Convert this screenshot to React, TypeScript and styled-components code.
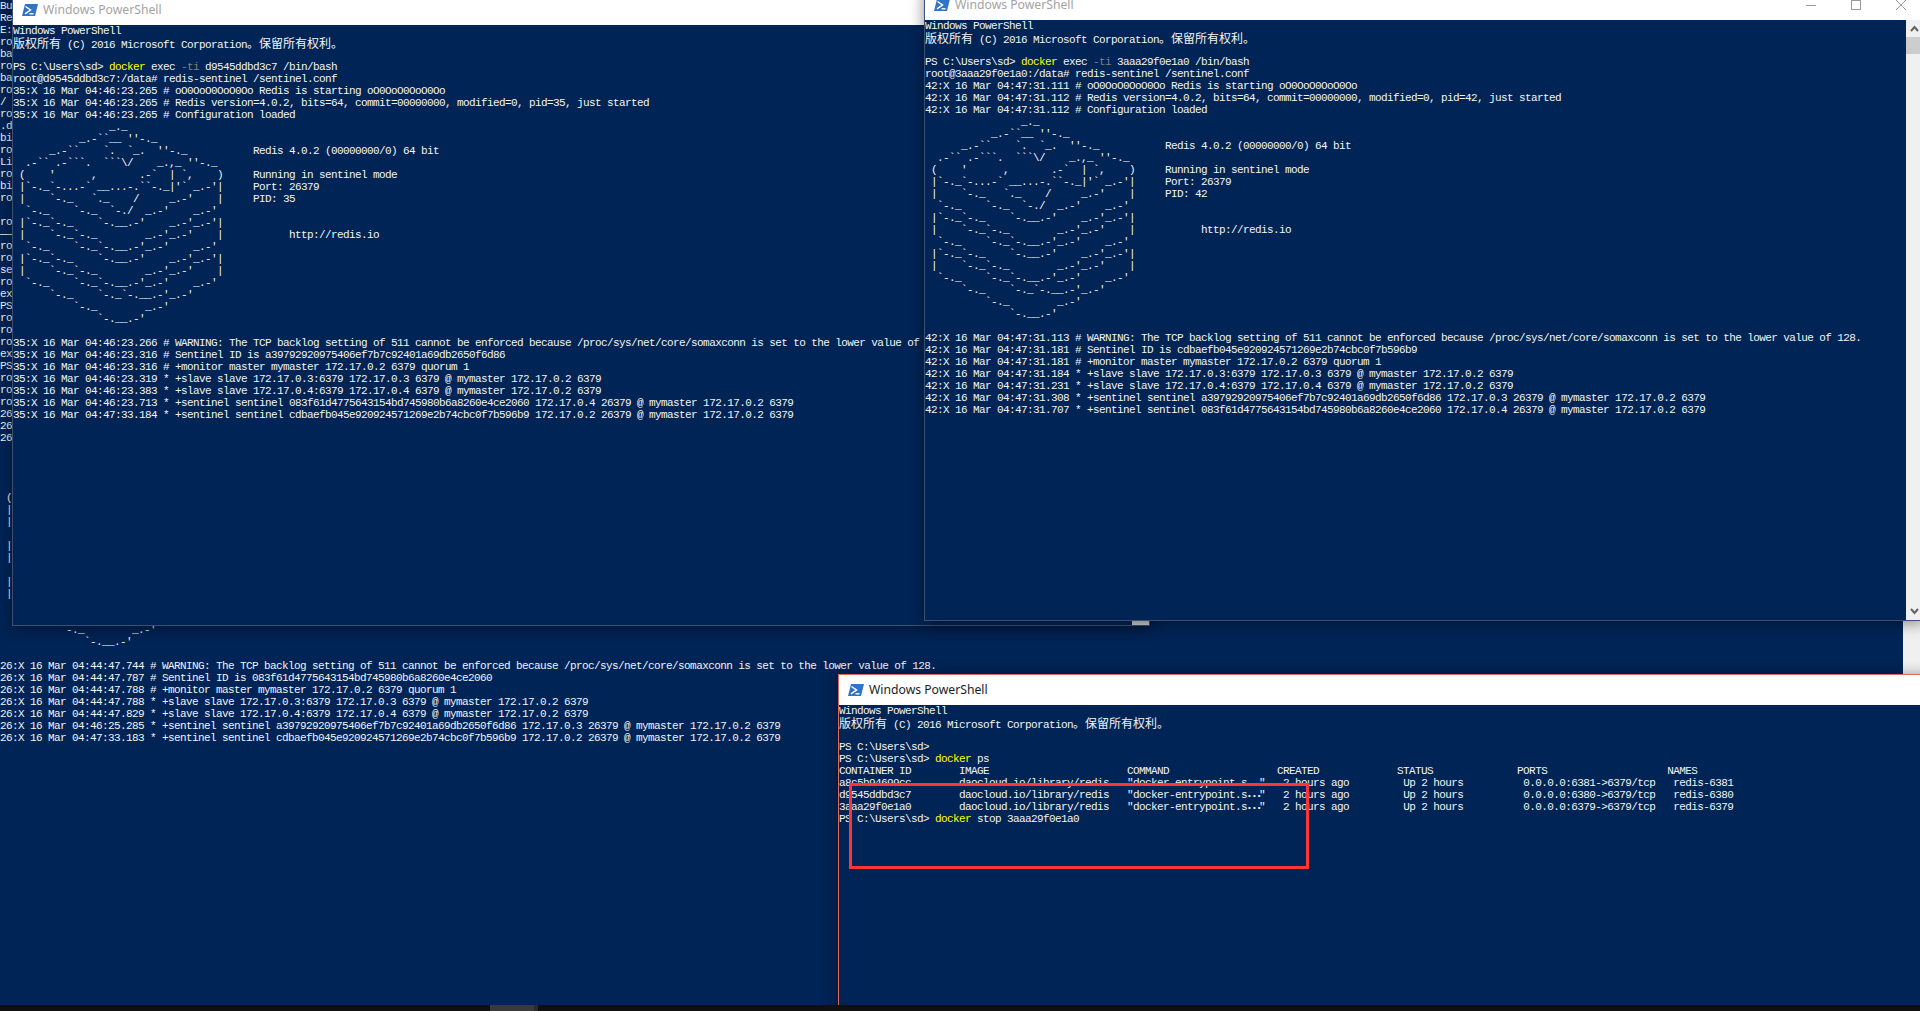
import React from 'react'
import styled, { createGlobalStyle } from 'styled-components'

const BLUE = '#012456'

const GlobalStyle = createGlobalStyle`
    html, body {
        margin: 0;
        padding: 0;
        background: ${BLUE};
        overflow: hidden;
    }
`

const Desktop = styled.div`
    position: relative;
    width: 1920px;
    height: 1011px;
    overflow: hidden;
    display: flex;
    flex-direction: column;
`

const BackTerminal = styled.div`
    flex: 1;
    min-height: 0;
    display: flex;
    background: ${BLUE};
`

const Taskbar = styled.div`
    position: relative;
    z-index: 5;
    height: 6px;
    padding-left: 490px;
    display: flex;
    background: #101010;
`

const TaskbarItem = styled.div`
    width: 44px;
    background: #3a3a3a;
    border-right: 4px solid #2b2b2b;
`

const Window = styled.div<{ $left: number; $top: number; $width: number; $height: number; $layer: number; $active?: boolean }>`
    position: absolute;
    left: ${(p) => p.$left}px;
    top: ${(p) => p.$top}px;
    width: ${(p) => p.$width}px;
    height: ${(p) => p.$height}px;
    z-index: ${(p) => p.$layer};
    box-sizing: border-box;
    display: flex;
    flex-direction: column;
    border: 1px solid ${(p) => (p.$active ? '#de6a5e' : '#3c5073')};
    box-shadow: 0 2px 14px rgba(0, 0, 0, 0.45);
`

const TitleBar = styled.div`
    flex: none;
    height: 30px;
    padding-left: 9px;
    display: flex;
    align-items: center;
    background: #fff;
`

const TitleIcon = styled.svg`
    flex: none;
    width: 16px;
    height: 12px;
    margin-right: 5px;
`

const TitleText = styled.span<{ $active?: boolean }>`
    font-family: 'Noto Sans', sans-serif;
    font-size: 12.2px;
    line-height: 30px;
    color: ${(p) => (p.$active ? '#1c1c1c' : '#a3a3a3')};
`

const Controls = styled.div`
    margin-left: auto;
    display: flex;
`

const ControlButton = styled.div`
    width: 45px;
    height: 30px;
    display: flex;
    align-items: center;
    justify-content: center;

    svg {
        width: 10px;
        height: 10px;
    }
`

const WindowBody = styled.div`
    flex: 1;
    min-height: 0;
    display: flex;
    background: ${BLUE};
`

const Console = styled.div`
    flex: 1;
    min-width: 0;
    overflow: hidden;
    background: ${BLUE};
`

const Line = styled.div`
    height: 12px;
    line-height: 12px;
    white-space: pre;
    color: #f4f4f4;
    font-family: 'Liberation Mono', monospace;
    font-size: 11px;
    letter-spacing: -0.6px;
`

const Command = styled.span`
    color: #ffff00;
`

const Flag = styled.span`
    color: #808080;
`

const Cjk = styled.span`
    font-family: 'Noto Sans CJK SC', sans-serif;
    font-size: 12px;
    letter-spacing: 0;
`

const WideDots = styled.span`
    display: inline-block;
    width: 12px;
    font-size: 8px;
    letter-spacing: 0;
    text-align: center;
`

const ScrollTrack = styled.div<{ $plain?: boolean }>`
    flex: none;
    width: 17px;
    display: flex;
    flex-direction: column;
    align-items: center;
    background: ${(p) => (p.$plain ? '#cdcdcd' : '#f0f0f0')};
`

const ScrollArrow = styled.svg`
    flex: none;
    width: 9px;
    height: 17px;
`

const ScrollThumb = styled.div`
    flex: none;
    width: 17px;
    height: 17px;
    background: #cdcdcd;
`

const ScrollSpacer = styled.div`
    flex: 1;
`

const Annotation = styled.div`
    position: absolute;
    z-index: 4;
    left: 849px;
    top: 783px;
    width: 460px;
    height: 86px;
    box-sizing: border-box;
    border: 3px solid #ff3535;
`

const redisArt = (pid: number) => [
    '                _._',
    "           _.-``__ ''-._",
    "      _.-``    `.  `_.  ''-._           Redis 4.0.2 (00000000/0) 64 bit",
    "  .-`` .-```.  ```\\/    _.,_ ''-._",
    " (    '      ,       .-`  | `,    )     Running in sentinel mode",
    " |`-._`-...-` __...-.``-._|'` _.-'|     Port: 26379",
    ` |    \`-._   \`._    /     _.-'    |     PID: ${pid}`,
    "  `-._    `-._  `-./  _.-'    _.-'",
    " |`-._`-._    `-.__.-'    _.-'_.-'|",
    " |    `-._`-._        _.-'_.-'    |           http://redis.io",
    "  `-._    `-._`-.__.-'_.-'    _.-'",
    " |`-._`-._    `-.__.-'    _.-'_.-'|",
    " |    `-._`-._        _.-'_.-'    |",
    "  `-._    `-._`-.__.-'_.-'    _.-'",
    "      `-._    `-._`-.__.-'_.-'",
    "          `-._        _.-'",
    "              `-.__.-'",
    ' ',
]

const TCP_WARNING =
    'WARNING: The TCP backlog setting of 511 cannot be enforced because /proc/sys/net/core/somaxconn is set to the lower value of 128.'
const ID_A = 'a39792920975406ef7b7c92401a69db2650f6d86'
const ID_B = '083f61d4775643154bd745980b6a8260e4ce2060'
const ID_C = 'cdbaefb045e920924571269e2b74cbc0f7b596b9'
const MASTER = '@ mymaster 172.17.0.2 6379'
const MONITOR = '+monitor master mymaster 172.17.0.2 6379 quorum 1'
const SLAVE_3 = `+slave slave 172.17.0.3:6379 172.17.0.3 6379 ${MASTER}`
const SLAVE_4 = `+slave slave 172.17.0.4:6379 172.17.0.4 6379 ${MASTER}`

// left edge of the terminal behind the two upper windows
const backStrip = [
    'Bu', 'Re', 'E:', 'ro', 'ba', 'ro', 'ba', 'ro', '/', 'ro', '.d', 'bi', 'ro', 'Li', 'ro', 'bi', 'ro', ' ',
    'ro', '——]', 'ro', 'ro', 'se', 'ro', 'ex', 'PS', 'ro', 'ro', 'ro', 'ex', 'PS', 'ro', 'ro', 'ro', '26', '26', '26',
]

const backLog = [
    `26:X 16 Mar 04:44:47.744 # ${TCP_WARNING}`,
    `26:X 16 Mar 04:44:47.787 # Sentinel ID is ${ID_B}`,
    `26:X 16 Mar 04:44:47.788 # ${MONITOR}`,
    `26:X 16 Mar 04:44:47.788 * ${SLAVE_3}`,
    `26:X 16 Mar 04:44:47.829 * ${SLAVE_4}`,
    `26:X 16 Mar 04:46:25.285 * +sentinel sentinel ${ID_A} 172.17.0.3 26379 ${MASTER}`,
    `26:X 16 Mar 04:47:33.183 * +sentinel sentinel ${ID_C} 172.17.0.2 26379 ${MASTER}`,
]

const leftLog = [
    `35:X 16 Mar 04:46:23.266 # ${TCP_WARNING}`,
    `35:X 16 Mar 04:46:23.316 # Sentinel ID is ${ID_A}`,
    `35:X 16 Mar 04:46:23.316 # ${MONITOR}`,
    `35:X 16 Mar 04:46:23.319 * ${SLAVE_3}`,
    `35:X 16 Mar 04:46:23.383 * ${SLAVE_4}`,
    `35:X 16 Mar 04:46:23.713 * +sentinel sentinel ${ID_B} 172.17.0.4 26379 ${MASTER}`,
    `35:X 16 Mar 04:47:33.184 * +sentinel sentinel ${ID_C} 172.17.0.2 26379 ${MASTER}`,
]

const rightLog = [
    `42:X 16 Mar 04:47:31.113 # ${TCP_WARNING}`,
    `42:X 16 Mar 04:47:31.181 # Sentinel ID is ${ID_C}`,
    `42:X 16 Mar 04:47:31.181 # ${MONITOR}`,
    `42:X 16 Mar 04:47:31.184 * ${SLAVE_3}`,
    `42:X 16 Mar 04:47:31.231 * ${SLAVE_4}`,
    `42:X 16 Mar 04:47:31.308 * +sentinel sentinel ${ID_A} 172.17.0.3 26379 ${MASTER}`,
    `42:X 16 Mar 04:47:31.707 * +sentinel sentinel ${ID_B} 172.17.0.4 26379 ${MASTER}`,
]

const containers = [
    ['a8c5b94699cc', '6381'],
    ['d9545ddbd3c7', '6380'],
    ['3aaa29f0e1a0', '6379'],
]

const Lines = ({ items }: { items: string[] }) => (
    <>
        {items.map((text, i) => (
            <Line key={i}>{text}</Line>
        ))}
    </>
)

const Banner = () => (
    <>
        <Line>Windows PowerShell</Line>
        <Line>
            <Cjk>版权所有</Cjk> (C) 2016 Microsoft Corporation<Cjk>。保留所有权利。</Cjk>
        </Line>
        <Line> </Line>
    </>
)

const PowerShellIcon = () => (
    <TitleIcon viewBox="0 0 16 12">
        <polygon points="3,0 16,0 13,12 0,12" fill="#2f74c6" />
        <path d="M3.5 2.5 L8.5 6 L3 9.8" fill="none" stroke="#fff" strokeWidth="1.5" />
        <path d="M7.5 9.8 H11.5" fill="none" stroke="#fff" strokeWidth="1.4" />
    </TitleIcon>
)

const Title = ({ active, children }: { active?: boolean; children?: React.ReactNode }) => (
    <TitleBar>
        <PowerShellIcon />
        <TitleText $active={active}>Windows PowerShell</TitleText>
        {children}
    </TitleBar>
)

const WindowControls = () => (
    <Controls>
        <ControlButton>
            <svg viewBox="0 0 10 10">
                <path d="M0 5.5 H10" stroke="#999" fill="none" />
            </svg>
        </ControlButton>
        <ControlButton>
            <svg viewBox="0 0 10 10">
                <rect x="0.5" y="0.5" width="9" height="9" stroke="#999" fill="none" />
            </svg>
        </ControlButton>
        <ControlButton>
            <svg viewBox="0 0 10 10">
                <path d="M0 0 L10 10 M10 0 L0 10" stroke="#999" fill="none" />
            </svg>
        </ControlButton>
    </Controls>
)

const Scrollbar = () => (
    <ScrollTrack>
        <ScrollArrow viewBox="0 0 9 17">
            <path d="M1 11 L4.5 7 L8 11" fill="none" stroke="#606060" strokeWidth="2" />
        </ScrollArrow>
        <ScrollThumb />
        <ScrollSpacer />
        <ScrollArrow viewBox="0 0 9 17">
            <path d="M1 6 L4.5 10 L8 6" fill="none" stroke="#606060" strokeWidth="2" />
        </ScrollArrow>
    </ScrollTrack>
)

const ContainerRow = ({ id, port }: { id: string; port: string }) => (
    <Line>
        {id.padEnd(20)}
        {'daocloud.io/library/redis'.padEnd(28)}
        {'"docker-entrypoint.s'}
        <WideDots>•••</WideDots>
        {'"   '}
        {'2 hours ago'.padEnd(20)}
        {'Up 2 hours'.padEnd(20)}
        {`0.0.0.0:${port}->6379/tcp`.padEnd(25)}
        {`redis-${port}`}
    </Line>
)

export default function App() {
    return (
        <Desktop>
            <GlobalStyle />
            <BackTerminal>
                <Console>
                    <Lines items={backStrip} />
                    <Lines items={redisArt(26)} />
                    <Lines items={backLog} />
                </Console>
                <ScrollTrack />
            </BackTerminal>
            <Taskbar>
                <TaskbarItem />
            </Taskbar>

            <Window $left={12} $top={-6} $width={1138} $height={632} $layer={1}>
                <Title />
                <WindowBody>
                    <Console>
                        <Banner />
                        <Line>
                            PS C:\Users\sd&gt; <Command>docker</Command> exec <Flag>-ti</Flag> d9545ddbd3c7 /bin/bash
                        </Line>
                        <Line>root@d9545ddbd3c7:/data# redis-sentinel /sentinel.conf</Line>
                        <Line>35:X 16 Mar 04:46:23.265 # oO0OoO0OoO0Oo Redis is starting oO0OoO0OoO0Oo</Line>
                        <Line>
                            35:X 16 Mar 04:46:23.265 # Redis version=4.0.2, bits=64, commit=00000000, modified=0, pid=35, just started
                        </Line>
                        <Line>35:X 16 Mar 04:46:23.265 # Configuration loaded</Line>
                        <Lines items={redisArt(35)} />
                        <Lines items={leftLog} />
                    </Console>
                    <ScrollTrack $plain />
                </WindowBody>
            </Window>

            <Window $left={924} $top={-11} $width={1000} $height={632} $layer={2}>
                <Title>
                    <WindowControls />
                </Title>
                <WindowBody>
                    <Console>
                        <Banner />
                        <Line>
                            PS C:\Users\sd&gt; <Command>docker</Command> exec <Flag>-ti</Flag> 3aaa29f0e1a0 /bin/bash
                        </Line>
                        <Line>root@3aaa29f0e1a0:/data# redis-sentinel /sentinel.conf</Line>
                        <Line>42:X 16 Mar 04:47:31.111 # oO0OoO0OoO0Oo Redis is starting oO0OoO0OoO0Oo</Line>
                        <Line>
                            42:X 16 Mar 04:47:31.112 # Redis version=4.0.2, bits=64, commit=00000000, modified=0, pid=42, just started
                        </Line>
                        <Line>42:X 16 Mar 04:47:31.112 # Configuration loaded</Line>
                        <Lines items={redisArt(42)} />
                        <Lines items={rightLog} />
                    </Console>
                    <Scrollbar />
                </WindowBody>
            </Window>

            <Window $left={838} $top={674} $width={1100} $height={350} $layer={3} $active>
                <Title active />
                <WindowBody>
                    <Console>
                        <Banner />
                        <Line>PS C:\Users\sd&gt;</Line>
                        <Line>
                            PS C:\Users\sd&gt; <Command>docker</Command> ps
                        </Line>
                        <Line>
                            {'CONTAINER ID        IMAGE                       COMMAND                  CREATED             STATUS              PORTS                    NAMES'}
                        </Line>
                        {containers.map(([id, port]) => (
                            <ContainerRow key={id} id={id} port={port} />
                        ))}
                        <Line>
                            PS C:\Users\sd&gt; <Command>docker</Command> stop 3aaa29f0e1a0
                        </Line>
                    </Console>
                </WindowBody>
            </Window>

            <Annotation />
        </Desktop>
    )
}
